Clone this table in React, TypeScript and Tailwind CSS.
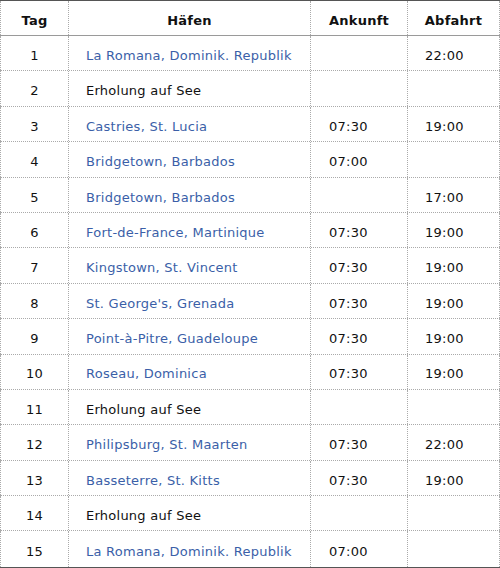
import React from "react";

type Row = { tag: string; port: string; link: boolean; an: string; ab: string };

const rows: Row[] = [
  { tag: "1", port: "La Romana, Dominik. Republik", link: true, an: "", ab: "22:00" },
  { tag: "2", port: "Erholung auf See", link: false, an: "", ab: "" },
  { tag: "3", port: "Castries, St. Lucia", link: true, an: "07:30", ab: "19:00" },
  { tag: "4", port: "Bridgetown, Barbados", link: true, an: "07:00", ab: "" },
  { tag: "5", port: "Bridgetown, Barbados", link: true, an: "", ab: "17:00" },
  { tag: "6", port: "Fort-de-France, Martinique", link: true, an: "07:30", ab: "19:00" },
  { tag: "7", port: "Kingstown, St. Vincent", link: true, an: "07:30", ab: "19:00" },
  { tag: "8", port: "St. George's, Grenada", link: true, an: "07:30", ab: "19:00" },
  { tag: "9", port: "Point-à-Pitre, Guadeloupe", link: true, an: "07:30", ab: "19:00" },
  { tag: "10", port: "Roseau, Dominica", link: true, an: "07:30", ab: "19:00" },
  { tag: "11", port: "Erholung auf See", link: false, an: "", ab: "" },
  { tag: "12", port: "Philipsburg, St. Maarten", link: true, an: "07:30", ab: "22:00" },
  { tag: "13", port: "Basseterre, St. Kitts", link: true, an: "07:30", ab: "19:00" },
  { tag: "14", port: "Erholung auf See", link: false, an: "", ab: "" },
  { tag: "15", port: "La Romana, Dominik. Republik", link: true, an: "07:00", ab: "" },
];

const cell = "border-l border-dotted border-[#aaaaaa] flex items-center pt-[5px]";

export default function App() {
  return (
    <div
      className="w-[500px] bg-white border-t border-b border-[#555] text-[13px] tracking-[0.25px] text-[#111]"
      style={{ fontFamily: '"DejaVu Sans", Verdana, sans-serif' }}
    >
      <div className="grid grid-cols-[68px_242px_97px_93px] h-[35px] border-b border-[#9a9a9a] font-bold">
        <div className={`${cell} justify-center`}>Tag</div>
        <div className={`${cell} justify-center`}>Häfen</div>
        <div className={`${cell} justify-center`}>Ankunft</div>
        <div className={`${cell} justify-center border-r`}>Abfahrt</div>
      </div>
      {rows.map((r, i) => (
        <div
          key={i}
          className={`grid grid-cols-[68px_242px_97px_93px] h-[35.4px] ${
            i < rows.length - 1 ? "border-b border-dotted border-[#aaaaaa]" : ""
          }`}
        >
          <div className={`${cell} justify-center`}>{r.tag}</div>
          <div className={`${cell} pl-[17px] ${r.link ? "text-[#3b5fa8]" : ""}`}>{r.port}</div>
          <div className={`${cell} pl-[18px]`}>{r.an}</div>
          <div className={`${cell} pl-[17px] border-r`}>{r.ab}</div>
        </div>
      ))}
    </div>
  );
}
